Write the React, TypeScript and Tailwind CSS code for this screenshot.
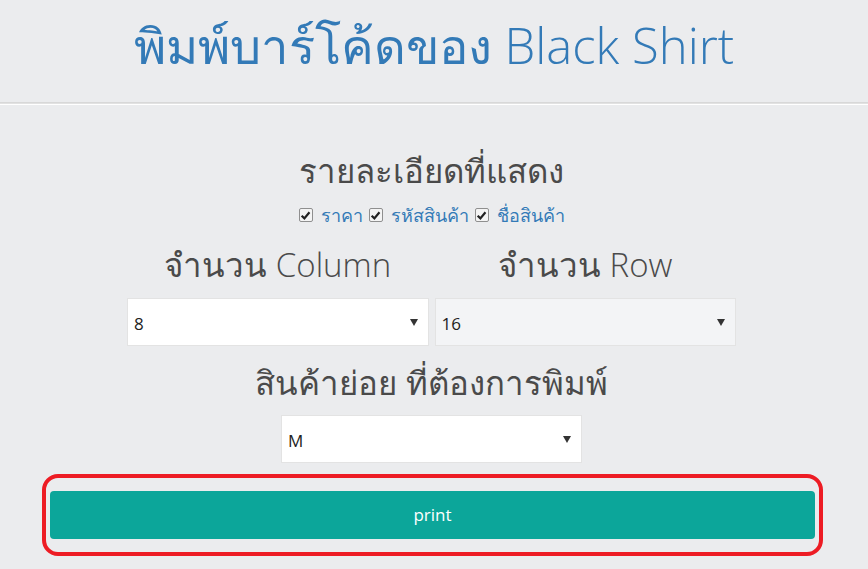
import React from "react";

const Check = () => (
  <span className="inline-flex h-[14px] w-[14px] items-center justify-center rounded-[2px] border border-[#8f8f8f] bg-[#f4f4f4]">
    <svg width="11" height="11" viewBox="0 0 10 10">
      <path d="M1.5 5.2 L4 7.6 L8.6 2" fill="none" stroke="#222" strokeWidth="2" />
    </svg>
  </span>
);

const Select = ({ value, gray }: { value: string; gray?: boolean }) => (
  <div
    className={`flex h-[48px] items-center justify-between border border-[#e3e3e3] pl-[6px] pr-[10px] text-[17px] text-[#222] ${
      gray ? "bg-[#f3f4f6]" : "bg-white"
    }`}
    style={{ fontFamily: "'Open Sans', 'Liberation Sans', sans-serif" }}
  >
    <span className="pt-[4px]">{value}</span>
    <svg width="8" height="8" viewBox="0 0 8 8">
      <path d="M0 1 L8 1 L4 8 Z" fill="#333" />
    </svg>
  </div>
);

export default function App() {
  const font = { fontFamily: "'Open Sans', 'Noto Sans', 'DejaVu Sans', sans-serif" };
  return (
    <div className="min-h-[569px] w-[868px] bg-[#ebecee]" style={font}>
      <div className="flex h-[102px] items-center justify-center pb-[12px]">
        <h1 className="text-[49px] font-light leading-none text-[#337ab7]">
          พิมพ์บาร์โค้ดของ Black Shirt
        </h1>
      </div>
      <div className="h-px bg-[#d8d8d8]" />
      <div className="h-px bg-[#e2e2e2]" />
      <div className="h-px bg-white" />

      <div className="ml-[127px] w-[609px] pt-[43px]">
        <h2 className="text-center text-[33px] font-light leading-[46px] text-[#4a4a4a]">
          รายละเอียดที่แสดง
        </h2>
        <div className="mt-[9px] flex items-center justify-center text-[18px] leading-[24px] text-[#337ab7]">
          <Check />
          <span className="ml-[8px] mr-[6px]">ราคา</span>
          <Check />
          <span className="ml-[8px] mr-[6px]">รหัสสินค้า</span>
          <Check />
          <span className="ml-[8px]">ชื่อสินค้า</span>
        </div>

        <div className="mt-[15px] grid grid-cols-2 gap-[6px]">
          <div>
            <h3 className="text-center text-[33px] font-light leading-[46px] text-[#4a4a4a]">
              จำนวน Column
            </h3>
            <div className="mt-[10px]">
              <Select value="8" />
            </div>
          </div>
          <div>
            <h3 className="text-center text-[33px] font-light leading-[46px] text-[#4a4a4a]">
              จำนวน Row
            </h3>
            <div className="mt-[10px]">
              <Select value="16" gray />
            </div>
          </div>
        </div>

        <h3 className="mt-[14px] text-center text-[33px] font-light leading-[46px] text-[#4a4a4a]">
          สินค้าย่อย ที่ต้องการพิมพ์
        </h3>
        <div className="mx-auto mt-[9px] w-[301px]">
          <Select value="M" />
        </div>
      </div>

      <div className="ml-[42px] mt-[11px] w-[781px] rounded-[16px] border-[4px] border-[#ed1c24] px-[4px] py-[13px]">
        <button className="flex h-[48px] w-full items-center justify-center rounded-[4px] bg-[#0ca69a] text-[17px] text-white">
          print
        </button>
      </div>
    </div>
  );
}
